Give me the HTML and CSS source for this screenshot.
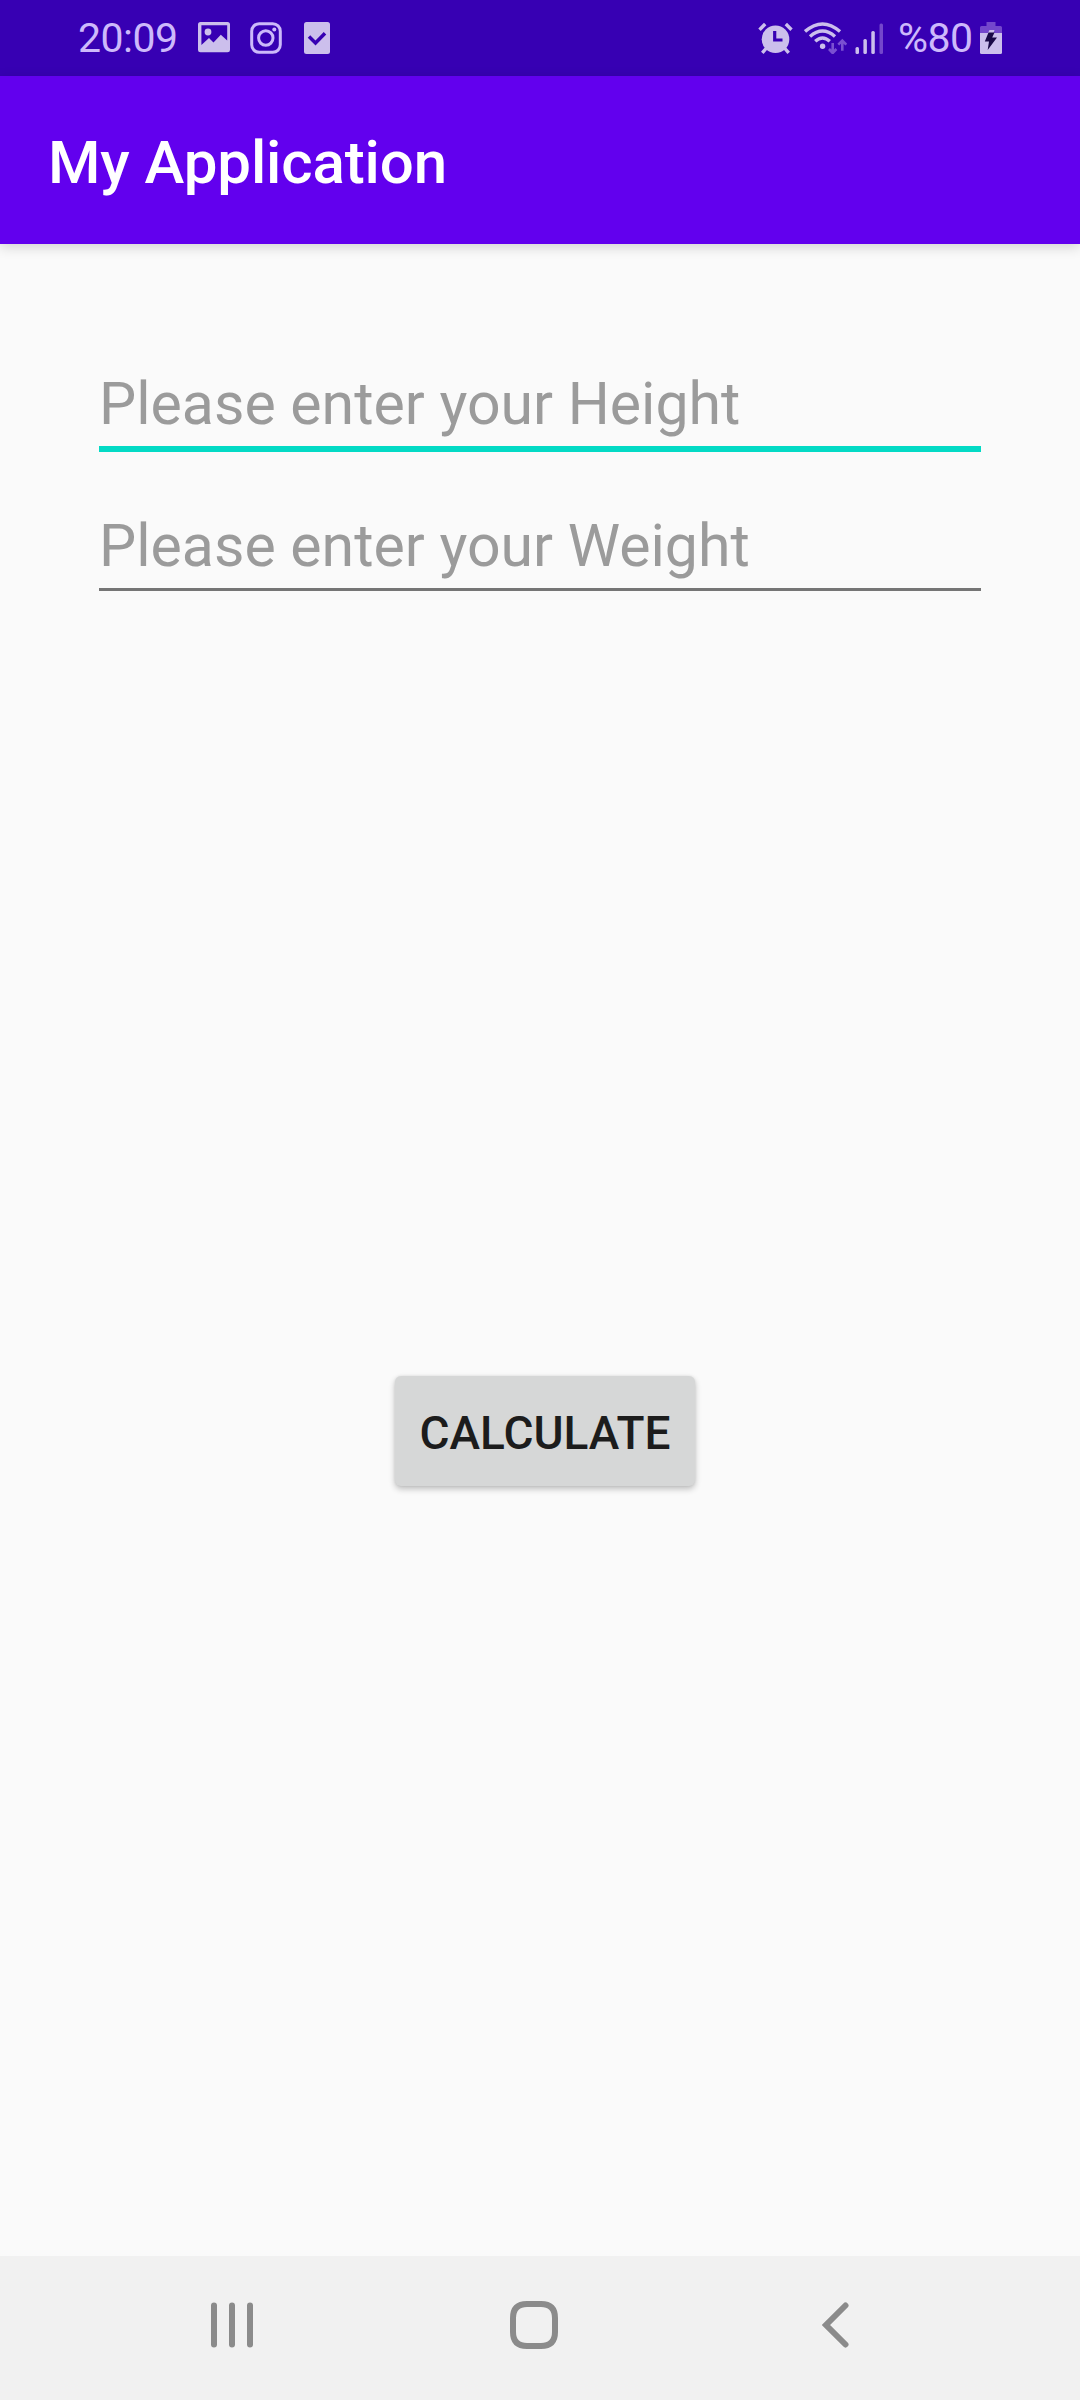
FILE: index.html
```html
<!DOCTYPE html>
<html lang="en">
<head>
<meta charset="utf-8">
<title>My Application</title>
<link rel="stylesheet" href="styles.css">
</head>
<body>
<div class="screen">
  <div class="status-bar">
    <div class="status-left">
      <span class="clock">20:09</span>
      <svg class="icon-picture" width="32" height="31" viewBox="0 0 32 31"><path fill-rule="evenodd" d="M2.500 0H29.500Q32 0 32 2.500V28Q32 30.300 29.500 30.300H2.500Q0 30.300 0 28V2.500Q0 0 2.500 0ZM3.400 3.200V23L11 16L15.500 20.500L22.800 12.800L29.200 18.500V3.200Z"/><circle cx="10" cy="10" r="3.400"/></svg>
      <svg class="icon-camera" width="32" height="32" viewBox="0 0 32 32" fill="none" stroke-width="3"><rect x="1.700" y="1.700" width="28.600" height="28.600" rx="7.500"/><circle cx="15.800" cy="16" r="7.200"/><circle class="dot" cx="24.300" cy="7.500" r="2"/></svg>
      <svg class="icon-check" width="26" height="32" viewBox="0 0 26 32"><rect width="26" height="32" rx="2.500"/><path class="cut" d="M5 14.500L11.500 21L21 11.200"/></svg>
    </div>
    <div class="status-right">
      <svg class="icon-alarm" width="35" height="32" viewBox="0 0 35 32"><circle cx="17.500" cy="17.300" r="13.800"/><path class="line" d="M1.500 7.800L7.200 2M33.500 7.800L27.800 2M8.500 26L4.300 30.800M26.500 26L30.700 30.800"/><path class="hands" d="M16.700 9V18H24.500"/></svg>
      <svg class="icon-wifi" width="43" height="32" viewBox="0 0 43 32"><path class="line" d="M1 9.500Q18.500-5.700 36 9.500M6 14.500Q18.500 3.700 31 14.500M11.200 19.300Q18.500 12.700 25.800 19.300"/><circle cx="18.600" cy="24.200" r="2.700"/><path class="dim" d="M28.700 21V31M25 27L28.700 31L32.400 27M38.300 28.800V19M34.300 22.700L38.300 18.700L42.300 22.700"/></svg>
      <svg class="icon-signal" width="29" height="32" viewBox="0 0 29 32"><rect x="0.500" y="25" width="3.500" height="7" rx="1.500"/><rect x="8.400" y="17" width="3.500" height="15" rx="1.500"/><rect x="16.300" y="9" width="3.500" height="23" rx="1.500"/><rect class="faint" x="24.500" y="1.500" width="3.500" height="30.500" rx="1.500"/></svg>
      <span class="charge">%80</span>
      <svg class="icon-battery" width="22" height="32" viewBox="0 0 22 32"><path class="faint" d="M0 11V5.500Q0 4 1.500 4H6.500V0H15.500V4H20.500Q22 4 22 5.500V11Z"/><path d="M0 11H22V30.500Q22 32 20.500 32H1.500Q0 32 0 30.500Z"/><path d="M8 11L9.500 8H14.500L13.500 11Z"/><path class="bolt" d="M8.500 10.500L4.800 19.500H9L7.700 28L17 15.500H12.200L14.500 10.500Z"/></svg>
    </div>
  </div>
  <header class="app-bar"><h1 class="title">My Application</h1></header>
  <main class="content">
    <div class="field field-active">Please enter your Height</div>
    <div class="field">Please enter your Weight</div>
    <button class="calculate" type="button">CALCULATE</button>
  </main>
  <nav class="nav-bar">
    <svg class="recents" width="42" height="46" viewBox="0 0 42 46"><path d="M3 3.500V42.500M21 3.500V42.500M39 3.500V42.500"/></svg>
    <svg class="home" width="48" height="48" viewBox="0 0 48 48"><path d="M17 3H31Q45 3 45 17V31Q45 45 31 45H17Q3 45 3 31V17Q3 3 17 3Z"/></svg>
    <svg class="back" width="27" height="46" viewBox="0 0 27 46"><path d="M23.500 3.500L4 23L23.500 42.500"/></svg>
  </nav>
</div>
</body>
</html>
```
FILE: styles.css
```css
* { box-sizing: border-box; }
body { margin: 0; font-family: Roboto, sans-serif; }
svg { display: block; flex: none; }

.screen { display: flex; flex-direction: column; width: 1080px; height: 2400px; background: #fafafa; }

.status-bar { display: flex; justify-content: space-between; height: 76px; padding: 0 78px 0 78px; background: #3700b3; color: #cdb9fb; fill: #ccbfec; stroke: none; }
.status-left, .status-right { display: flex; align-items: center; }
.clock, .charge { padding-top: 1px; font-size: 41px; line-height: 75px; letter-spacing: -.5px; white-space: nowrap; }
.clock { width: 120px; }
.charge { width: 82px; }
.icon-picture { margin-top: -1px; }
.icon-camera { margin-left: 20px; stroke: #ccb9fa; }
.icon-camera .dot { fill: #ccb9fa; stroke: none; }
.icon-check { margin-left: 22px; }
.cut { fill: none; stroke: #3700b3; stroke-width: 3.500; }
.line { fill: none; stroke: #ccbfec; stroke-width: 3.400; }
.hands { fill: none; stroke: #3700b3; stroke-width: 3.200; }
.dim { fill: none; stroke: #7a50d1; stroke-width: 2.600; }
.faint { fill: #7447cc; }
.bolt { fill: #1b0a48; }
.icon-wifi { margin-left: 11px; }
.icon-signal { margin: 0 14px 0 8px; }

.app-bar { display: flex; align-items: center; height: 168px; padding: 5px 48px 0; background: #6200ee; box-shadow: 0 3px 12px rgba(0, 0, 0, .16); }
.title { margin: 0; color: #fff; font-size: 60px; font-weight: 500; line-height: 70px; letter-spacing: -.1px; }

.content { display: flex; flex: 1; flex-direction: column; padding: 125px 99px 0; }
.field { height: 80px; margin-bottom: 65px; border-bottom: 3px solid #757575; color: #9b9b9b; font-size: 59px; line-height: 70px; white-space: nowrap; }
.field-active { height: 83px; margin-bottom: 59px; border-bottom: 6px solid #03dac5; }
.calculate { width: 300px; height: 110px; margin: 720px 0 0 296px; padding: 3px 0 0; border: 0; border-radius: 6px; background: #d6d7d7; box-shadow: 0 3px 6px rgba(0, 0, 0, .24), 0 0 3px rgba(0, 0, 0, .08); color: #1c1c1c; font: 500 46px/54px Roboto, sans-serif; }

.nav-bar { display: flex; align-items: center; height: 144px; padding: 0 0 6px 211px; background: #f1f1f1; fill: none; stroke: #8b8b8b; stroke-width: 6; stroke-linecap: round; }
.home { margin-left: 257px; }
.back { margin-left: 264px; }
```
